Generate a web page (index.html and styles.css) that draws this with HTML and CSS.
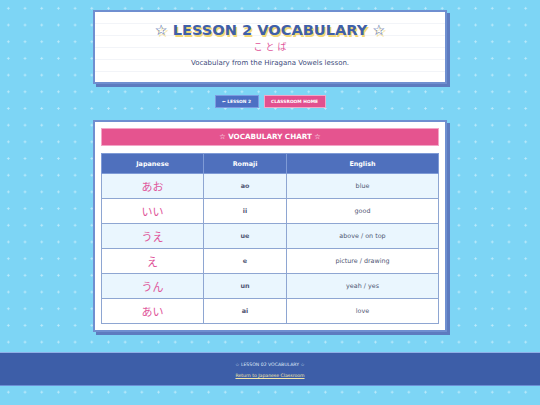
FILE: index.html
```html
<!DOCTYPE html>
<html lang="en">
<head>
<meta charset="utf-8">
<title>Lesson 2 Vocabulary</title>
<link rel="stylesheet" href="styles.css">
</head>
<body>
<div class="page">
  <header class="hero">
    <h1 class="hero-title">☆ LESSON 2 VOCABULARY ☆</h1>
    <div class="hero-sub">ことば</div>
    <p class="hero-desc">Vocabulary from the Hiragana Vowels lesson.</p>
  </header>
  <nav class="nav">
    <a class="btn btn-blue" href="#">← LESSON 2</a>
    <a class="btn btn-pink" href="#">CLASSROOM HOME</a>
  </nav>
  <section class="chart">
    <h2 class="chart-title">☆ VOCABULARY CHART ☆</h2>
    <table class="vocab">
      <thead>
        <tr><th class="c-jp">Japanese</th><th class="c-ro">Romaji</th><th class="c-en">English</th></tr>
      </thead>
      <tbody>
        <tr><td class="jp">あお</td><td class="ro">ao</td><td class="en">blue</td></tr>
        <tr><td class="jp">いい</td><td class="ro">ii</td><td class="en">good</td></tr>
        <tr><td class="jp">うえ</td><td class="ro">ue</td><td class="en">above / on top</td></tr>
        <tr><td class="jp">え</td><td class="ro">e</td><td class="en">picture / drawing</td></tr>
        <tr><td class="jp">うん</td><td class="ro">un</td><td class="en">yeah / yes</td></tr>
        <tr><td class="jp">あい</td><td class="ro">ai</td><td class="en">love</td></tr>
      </tbody>
    </table>
  </section>
</div>
<footer class="footer">
  <div class="footer-title">☆ LESSON 02 VOCABULARY ☆</div>
  <div class="footer-row"><a class="footer-link" href="#">Return to Japanese Classroom</a></div>
</footer>
</body>
</html>
```

FILE: styles.css
```css
html, body {
  margin: 0;
  padding: 0;
}
body {
  font-family: "DejaVu Sans", Verdana, "Noto Sans CJK JP", sans-serif;
  background-color: #7dd5f5;
  background-image: radial-gradient(circle, rgba(255,255,255,0.5) 0.9px, transparent 1.3px);
  background-size: 16.7px 16.7px;
  background-position: 0 0;
  min-height: 405px;
  color: #3c4a7a;
}
.page {
  width: 354px;
  margin: 0 auto;
  padding-top: 10px;
}
.hero {
  background-color: #fff;
  background-image: repeating-linear-gradient(to bottom, #fff 0, #fff 11px, #f2f4f8 11px, #f2f4f8 12px);
  border: 2px solid #6f8fd0;
  box-shadow: 3px 3px 0 #5d7bbf;
  box-sizing: border-box;
  height: 74px;
  text-align: center;
  padding-top: 10px;
}
.hero-title {
  margin: 0;
  font-size: 14.6px;
  font-weight: bold;
  color: #3f5fa9;
  line-height: 16px;
  text-shadow: 1.5px 1.5px 0 #f3d776;
}
.hero-sub {
  margin-top: 3px;
  font-family: "Noto Sans CJK JP", sans-serif;
  font-size: 9px;
  line-height: 11px;
  letter-spacing: 3px;
  padding-left: 3px;
  color: #e0559a;
}
.hero-desc {
  margin: 7px 0 0;
  font-size: 7px;
  line-height: 9px;
  color: #3c4a7a;
}
.nav {
  display: flex;
  justify-content: center;
  gap: 5px;
  margin-top: 11px;
}
.btn {
  display: block;
  height: 13px;
  box-sizing: border-box;
  line-height: 11px;
  padding: 0;
  font-size: 4.4px;
  font-weight: bold;
  color: #fff;
  text-decoration: none;
  white-space: nowrap;
  text-align: center;
}
.btn-blue {
  background: #4d70c4;
  border: 1px solid #7d9ae0;
  width: 44px;
}
.btn-pink {
  background: #e2508f;
  border: 1px solid #f2a8c8;
  width: 62px;
}
.chart {
  margin-top: 12px;
  background: #fff;
  border: 2px solid #6f8fd0;
  box-shadow: 3px 3px 0 #5d7bbf;
  padding: 6px 6px 6px;
}
.chart-title {
  margin: 0;
  height: 18px;
  box-sizing: border-box;
  background: #e5548f;
  border: 1px solid #f3a5c6;
  color: #fff;
  font-size: 7.2px;
  font-weight: bold;
  line-height: 16px;
  text-align: center;
}
.vocab {
  margin-top: 7px;
  width: 100%;
  border-collapse: collapse;
  border: 1px solid #8ea6d2;
  table-layout: fixed;
}
.vocab th {
  background: #4f70bd;
  color: #fff;
  font-size: 6.4px;
  font-weight: bold;
  height: 19px;
  padding: 0;
  border: 1px solid #7f9bd6;
}
.c-jp { width: 101px; }
.c-ro { width: 82px; }
.vocab td {
  border: 1px solid #8ea6d2;
  height: 24px;
  padding: 0;
  text-align: center;
  font-size: 6.4px;
  color: #4f5673;
}
.vocab tbody tr:nth-child(odd) td {
  background: #eaf6fe;
}
.vocab tbody tr:nth-child(even) td {
  background: #fff;
}
.vocab td.jp {
  font-family: "Noto Sans CJK JP", sans-serif;
  font-size: 11px;
  color: #e0559a;
}
.vocab td.ro {
  font-weight: bold;
}
.footer {
  margin-top: 20px;
  background: #3d5ea8;
  border-top: 1px solid #8fb0e8;
  border-bottom: 1px solid #6c8fd6;
  height: 34px;
  box-sizing: border-box;
  text-align: center;
  padding-top: 9px;
  font-size: 4.6px;
}
.footer-title {
  color: #dfe6f6;
  line-height: 6px;
}
.footer-row {
  margin-top: 5px;
  line-height: 6px;
}
.footer-link {
  color: #f4e7a6;
  text-decoration: underline;
}
```
